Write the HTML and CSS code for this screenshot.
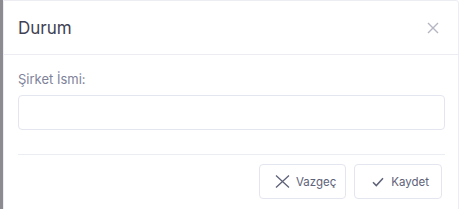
FILE: index.html
```html
<!DOCTYPE html>
<html lang="tr">
<head>
    <meta charset="UTF-8">
    <meta name="viewport" content="width=device-width, initial-scale=1.0">
    <title>Durum</title>
    <link rel="stylesheet" href="styles.css">
</head>
<body>
    <div class="screen">
        <div class="modal">
            <div class="modal-header">
                <h3 class="modal-title">Durum</h3>
                <button class="modal-close" aria-label="Kapat">
                    <svg width="12" height="12" viewBox="0 0 12 12"><path d="M1 1L11 11M11 1L1 11" stroke="#b5b5c3" stroke-width="1.4" fill="none"/></svg>
                </button>
            </div>
            <div class="modal-body">
                <label class="form-label" for="company">Şirket İsmi:</label>
                <input type="text" id="company" class="form-input">
                <div class="modal-footer">
                    <button class="btn">
                        <svg width="15" height="13" viewBox="0 0 15 13"><path d="M1 0.5L14 12.5M14 0.5L1 12.5" stroke="#5e6278" stroke-width="1.3" fill="none"/></svg>
                        Vazgeç
                    </button>
                    <button class="btn btn-save">
                        <svg width="12" height="10" viewBox="0 0 12 10"><path d="M1 5.2L4.3 8.6L11 1.2" stroke="#5e6278" stroke-width="1.5" fill="none"/></svg>
                        Kaydet
                    </button>
                </div>
            </div>
        </div>
    </div>
</body>
</html>
```

FILE: styles.css
```css
body {
    margin: 0;
    background: #fff;
    font-family: Inter, "Open Sans", sans-serif;
}

.screen {
    display: flex;
    height: 209px;
    border-left: 3px solid #8c8c90;
    overflow: hidden;
}

.modal {
    width: 454px;
    height: 240px;
    border: 1px solid #ebedf3;
    border-radius: 0 3px 0 0;
    background: #fff;
}

.modal-header {
    display: flex;
    align-items: center;
    justify-content: space-between;
    height: 53px;
    padding: 0 19px 0 14px;
    border-bottom: 1px solid #ebedf3;
}

.modal-title {
    margin: 0;
    font-size: 17px;
    font-weight: 400;
    color: #3f4254;
}

.modal-close {
    display: flex;
    padding: 0;
    border: none;
    background: none;
}

.modal-body {
    padding: 16px 13px 0 14px;
}

.form-label {
    display: block;
    font-size: 13px;
    color: #7e8299;
    margin-bottom: 8px;
}

.form-input {
    display: block;
    width: 100%;
    height: 35px;
    box-sizing: border-box;
    border: 1px solid #e4e6ef;
    border-radius: 4px;
}

.modal-footer {
    display: flex;
    justify-content: flex-end;
    gap: 8px;
    margin-top: 24px;
    padding: 9px 3px 0 0;
    border-top: 1px solid #ebedf3;
}

.btn {
    display: flex;
    align-items: center;
    gap: 6px;
    height: 35px;
    padding: 0 9px 0 15px;
    border: 1px solid #e4e6ef;
    border-radius: 4px;
    background: #fff;
    color: #5e6278;
    font-family: Inter, sans-serif;
    font-size: 11.5px;
}

.btn-save {
    padding: 0 12px 0 17px;
    gap: 7px;
}
```
